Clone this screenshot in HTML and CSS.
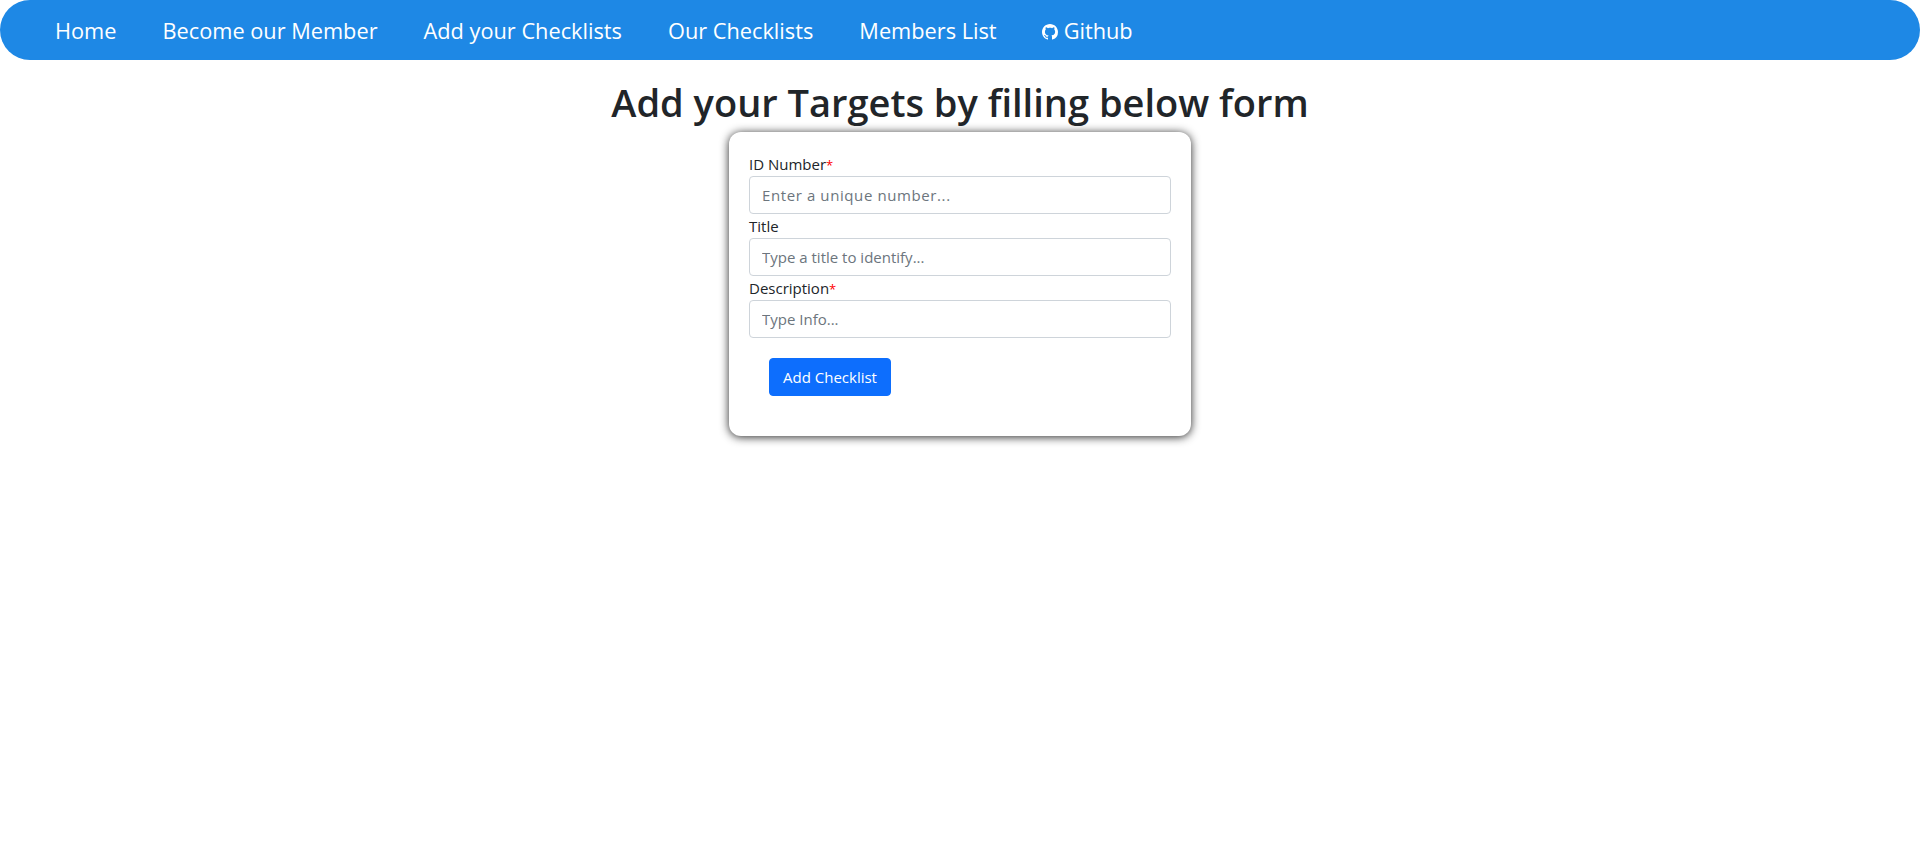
FILE: index.html
```html
<!DOCTYPE html>
<html lang="en">
<head>
    <meta charset="UTF-8">
    <meta name="viewport" content="width=device-width, initial-scale=1.0">
    <title>Add your Targets</title>
    <link rel="stylesheet" href="styles.css">
</head>
<body>
    <nav class="navbar">
        <ul class="nav-list">
            <li><a href="#home">Home</a></li>
            <li><a href="#member">Become our Member</a></li>
            <li><a href="#add">Add your Checklists</a></li>
            <li><a href="#checklists">Our Checklists</a></li>
            <li><a href="#members">Members List</a></li>
            <li>
                <a href="#github" class="github-link">
                    <svg class="github-icon" viewBox="0 0 16 16" aria-hidden="true">
                        <path d="M8 0C3.58 0 0 3.58 0 8c0 3.54 2.29 6.53 5.47 7.59.4.07.55-.17.55-.38 0-.19-.01-.82-.01-1.49-2.01.37-2.53-.49-2.69-.94-.09-.23-.48-.94-.82-1.13-.28-.15-.68-.52-.01-.53.63-.01 1.08.58 1.23.82.72 1.21 1.87.87 2.33.66.07-.52.28-.87.51-1.07-1.78-.2-3.64-.89-3.64-3.95 0-.87.31-1.59.82-2.15-.08-.2-.36-1.02.08-2.12 0 0 .67-.21 2.2.82.64-.18 1.32-.27 2-.27s1.36.09 2 .27c1.53-1.04 2.2-.82 2.2-.82.44 1.1.16 1.92.08 2.12.51.56.82 1.27.82 2.15 0 3.07-1.87 3.75-3.65 3.95.29.25.54.73.54 1.48 0 1.07-.01 1.93-.01 2.2 0 .21.15.46.55.38A8.01 8.01 0 0 0 16 8c0-4.42-3.58-8-8-8z"/>
                    </svg>
                    Github
                </a>
            </li>
        </ul>
    </nav>

    <h1 class="page-title">Add your Targets by filling below form</h1>

    <div class="form-card">
        <form>
            <label for="idNumber">ID Number<span class="required">*</span></label>
            <input type="text" id="idNumber" placeholder="Enter a unique number...">
            <label for="title">Title</label>
            <input type="text" id="title" placeholder="Type a title to identify...">
            <label for="description">Description<span class="required">*</span></label>
            <input type="text" id="description" placeholder="Type Info...">
            <button type="submit" class="submit-btn">Add Checklist</button>
        </form>
    </div>
</body>
</html>
```

FILE: styles.css
```css
* {
    box-sizing: border-box;
}

body {
    font-family: "Open Sans", "Noto Sans", Arial, sans-serif;
    font-size: 15px;
    line-height: 24px;
    color: #212529;
    background-color: #fff;
    margin: 0;
    min-height: 100vh;
}

.navbar {
    height: 60px;
    background-color: #1e88e5;
    border-radius: 30px;
    padding: 0 55px;
    display: flex;
    align-items: center;
}

.nav-list {
    list-style: none;
    margin: 0;
    padding: 3px 0 0;
    display: flex;
    gap: 46px;
}

.nav-list a {
    color: white;
    text-decoration: none;
    font-size: 21.75px;
}

.github-link {
    display: flex;
    align-items: center;
    gap: 6px;
    margin-left: -1px;
}

.github-icon {
    width: 16px;
    height: 16px;
    fill: white;
    margin-top: 3px;
}

.page-title {
    margin: 18px 0 0;
    height: 54px;
    font-size: 38px;
    line-height: 48px;
    font-weight: 600;
    text-align: center;
}

.form-card {
    width: 462px;
    margin: 0 auto;
    padding: 20px;
    background-color: white;
    border-radius: 12px;
    box-shadow: 0 1px 10px rgba(0, 0, 0, 0.85);
}

form label {
    display: block;
    height: 24px;
}

.required {
    color: red;
    font-size: 13px;
    line-height: 1;
}

form input {
    display: block;
    width: 100%;
    height: 38px;
    padding: 6px 12px;
    font-family: inherit;
    font-size: 15px;
    color: #212529;
    border: 1px solid #ced4da;
    border-radius: 4px;
}

form input::placeholder {
    color: #6c757d;
}

#idNumber::placeholder {
    letter-spacing: 0.6px;
}

.submit-btn {
    display: block;
    height: 38px;
    width: 122px;
    margin: 20px 0 20px 20px;
    padding: 0;
    font-family: inherit;
    font-size: 15px;
    color: white;
    background-color: #0d6efd;
    border: 1px solid #0d6efd;
    border-radius: 4px;
}
```
